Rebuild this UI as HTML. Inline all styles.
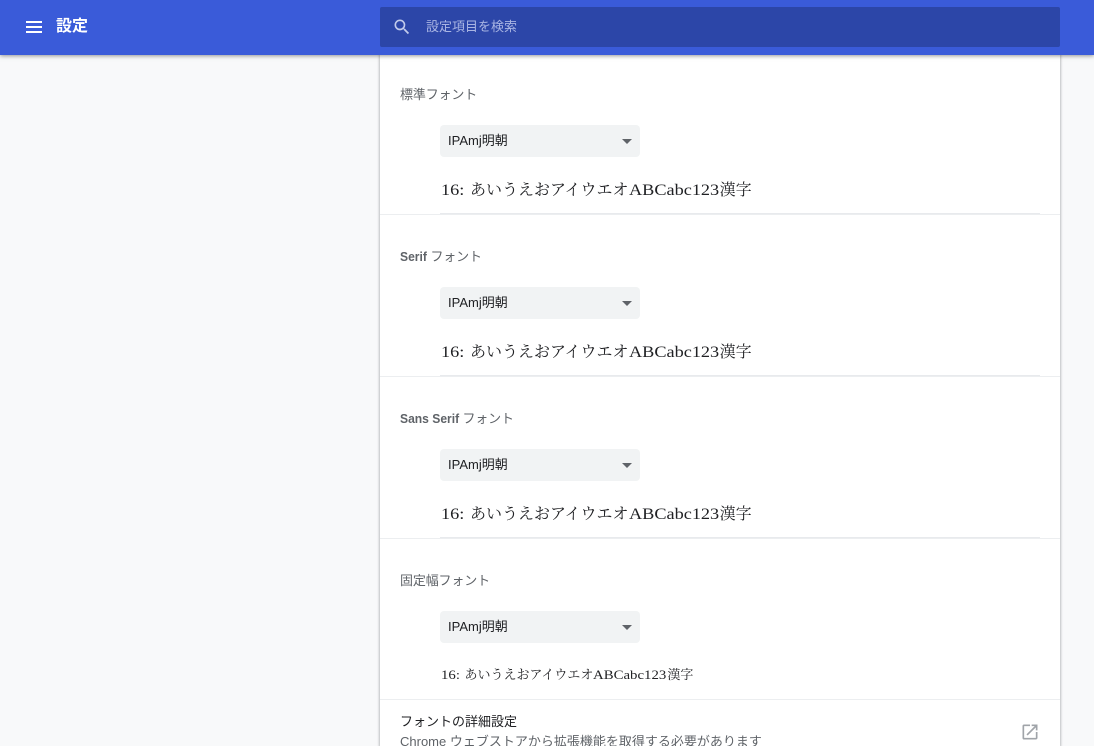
<!DOCTYPE html>
<html lang="ja">
<head>
<meta charset="utf-8">
<title>設定</title>
<style>
html,body{margin:0;padding:0;width:1094px;height:746px;overflow:hidden;background:#f8f9fa}
body{position:relative;font-family:"Liberation Sans","Noto Sans CJK JP",sans-serif;font-size:13px}
.a{position:absolute;white-space:nowrap}
#card{left:380px;top:55px;width:680px;height:691px;background:#fff;box-shadow:0 0 2px 1px rgba(60,64,67,.3)}
#hdr{left:0;top:0;width:1094px;height:55px;background:#3a5bd9;box-shadow:0 1px 4px rgba(60,64,67,.55);z-index:5}
#search{left:380px;top:7px;width:680px;height:40px;background:#2c46a8;border-radius:2px}
.lab{left:400px;color:#5f6368;line-height:20px;height:20px;letter-spacing:-.15px}
.lab b{font-weight:700;letter-spacing:0;display:inline-block;transform:scaleX(.93);transform-origin:0 0}
.sel{left:440px;width:200px;height:32px;background:#f1f3f4;border-radius:4px}
.sel span{position:absolute;left:8px;top:0;line-height:31px;color:#202124}
.sel i{position:absolute;left:182px;top:14px;width:0;height:0;border-left:5px solid transparent;border-right:5px solid transparent;border-top:5px solid #5f6368}
.smp{left:441px;color:#202124;font-family:"Liberation Serif","Noto Serif CJK SC",serif;font-size:16px;line-height:22px}
.smp u{text-decoration:none;display:inline-block;white-space:pre;transform:scaleX(1.14);transform-origin:0 0}
.smp u.n{width:29px}
.smp u.t{width:91px}
.smp.s u.n{width:23.5px}
.smp.s u.t{width:74px}
.l1{left:440px;width:600px;height:1px;background:#e8eaed}
.l2{left:380px;width:680px;height:1px;background:#eceef0}
</style>
</head>
<body>
<div class="a" id="card"></div>

<div class="a" id="hdr">
  <svg class="a" style="left:26px;top:21px" width="16" height="12" viewBox="0 0 16 12"><path fill="#fff" d="M0 0h16v2H0zM0 5h16v2H0zM0 10h16v2H0z"/></svg>
  <div class="a" style="left:56px;top:16px;font-size:16px;line-height:22px;font-weight:700;color:#fff">設定</div>
  <div class="a" id="search">
    <svg class="a" style="left:12px;top:10px" width="20" height="20" viewBox="0 0 24 24"><path fill="#c2cbeb" d="M15.5 14h-.79l-.28-.27A6.47 6.47 0 0 0 16 9.5 6.5 6.5 0 1 0 9.5 16c1.61 0 3.09-.59 4.23-1.57l.27.28v.79l5 4.99L20.49 19l-4.99-5zm-6 0C7.01 14 5 11.99 5 9.5S7.01 5 9.5 5 14 7.01 14 9.5 11.99 14 9.5 14z"/></svg>
    <div class="a" style="left:46px;top:10px;line-height:20px;font-size:13px;color:#a9b5e3">設定項目を検索</div>
  </div>
</div>

<div class="a lab" style="top:85px">標準フォント</div>
<div class="a sel" style="top:125px"><span>IPAmj明朝</span><i></i></div>
<div class="a smp" style="top:180px"><u class="n">16: </u>あいうえおアイウエオ<u class="t">ABCabc123</u>漢字</div>
<div class="a l1" style="top:213px"></div>
<div class="a l2" style="top:214px"></div>

<div class="a lab" style="top:247px"><b style="width:27px">Serif</b> フォント</div>
<div class="a sel" style="top:287px"><span>IPAmj明朝</span><i></i></div>
<div class="a smp" style="top:342px"><u class="n">16: </u>あいうえおアイウエオ<u class="t">ABCabc123</u>漢字</div>
<div class="a l1" style="top:375px"></div>
<div class="a l2" style="top:376px"></div>

<div class="a lab" style="top:409px"><b style="width:59px">Sans Serif</b> フォント</div>
<div class="a sel" style="top:449px"><span>IPAmj明朝</span><i></i></div>
<div class="a smp" style="top:504px"><u class="n">16: </u>あいうえおアイウエオ<u class="t">ABCabc123</u>漢字</div>
<div class="a l1" style="top:537px"></div>
<div class="a l2" style="top:538px"></div>

<div class="a lab" style="top:571px">固定幅フォント</div>
<div class="a sel" style="top:611px"><span>IPAmj明朝</span><i></i></div>
<div class="a smp s" style="top:664px;font-size:13px"><u class="n">16: </u>あいうえおアイウエオ<u class="t">ABCabc123</u>漢字</div>
<div class="a l2" style="top:699px"></div>

<div class="a" style="left:400px;top:712px;line-height:20px;color:#202124">フォントの詳細設定</div>
<div class="a" style="left:400px;top:732px;line-height:20px;color:#5f6368">Chrome ウェブストアから拡張機能を取得する必要があります</div>
<svg class="a" style="left:1020px;top:722px" width="20" height="20" viewBox="0 0 24 24"><path fill="#a0a4a9" d="M19 19H5V5h7V3H5a2 2 0 0 0-2 2v14a2 2 0 0 0 2 2h14c1.1 0 2-.9 2-2v-7h-2v7zM14 3v2h3.59l-9.83 9.83 1.41 1.41L19 6.41V10h2V3h-7z"/></svg>
</body>
</html>
